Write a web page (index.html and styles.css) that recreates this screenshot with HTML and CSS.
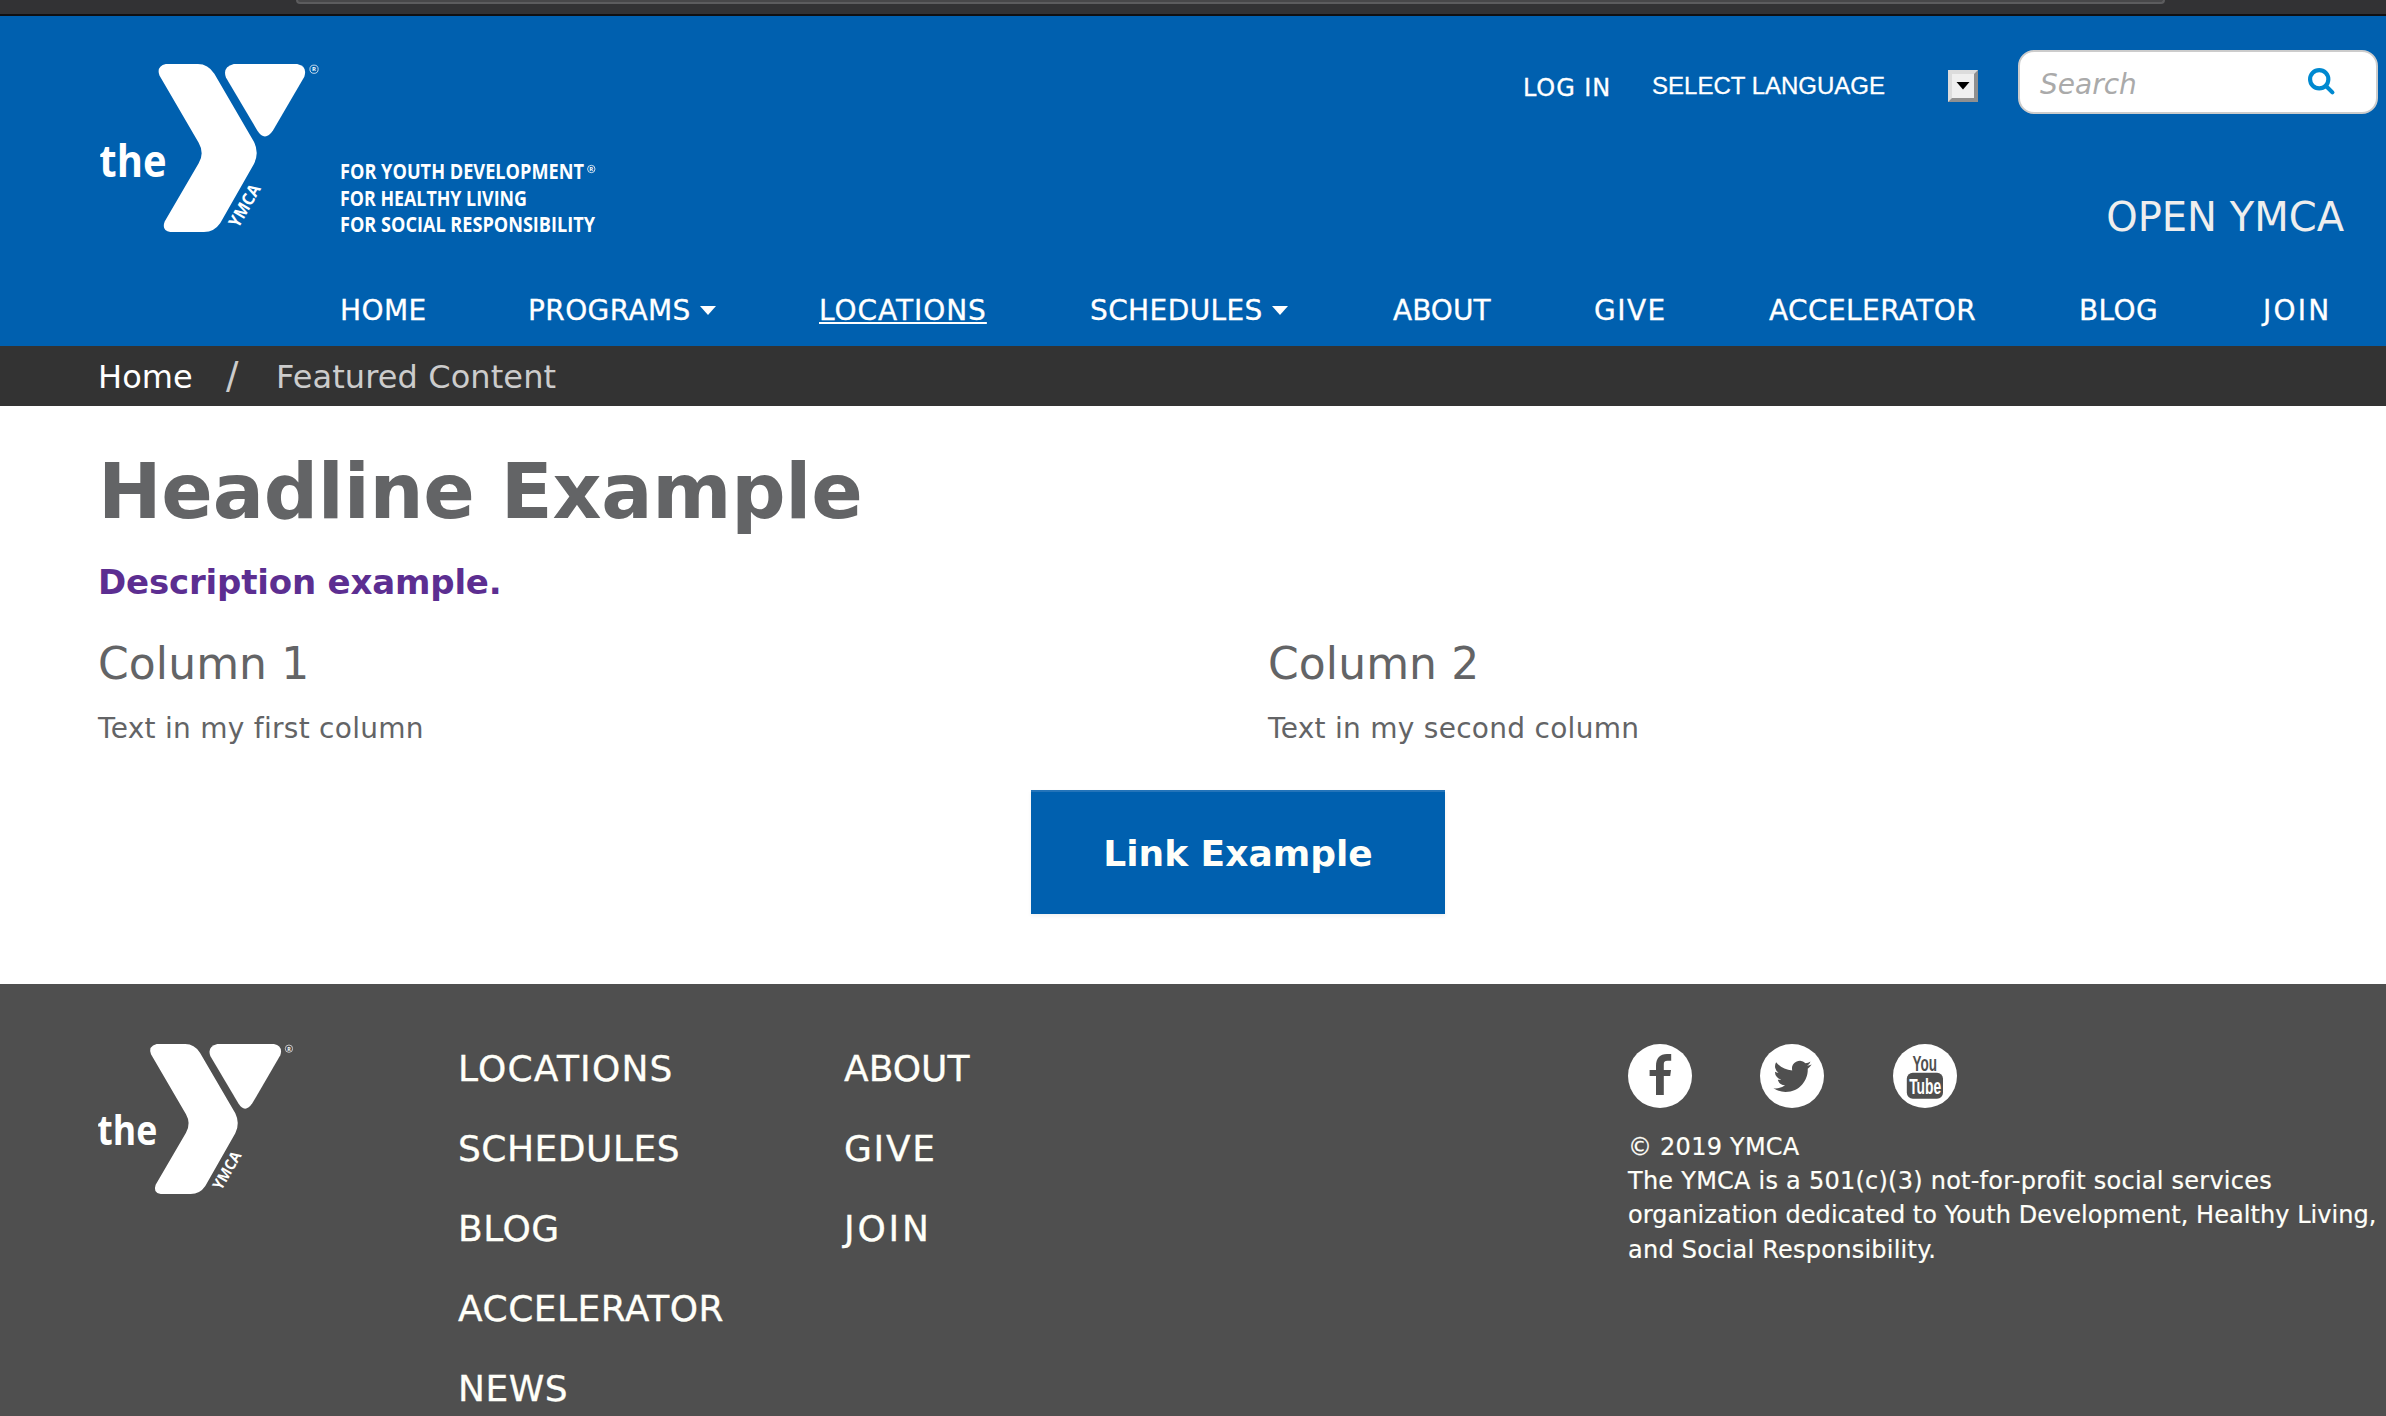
FILE: index.html
```html
<!DOCTYPE html>
<html lang="en">
<head>
<meta charset="utf-8">
<title>Headline Example | Open YMCA</title>
<link rel="stylesheet" href="styles.css">
</head>
<body>
<svg class="defs" aria-hidden="true">
  <symbol id="logo" viewBox="54 72 586 450">
    <path d="M230 72H316Q343 72 360 98L466 280Q481 311 466 340L376 498Q360 522 332 522H242Q218 518 227 494L318 338Q334 311 318 283L213 103Q204 78 230 72Z"/>
    <path d="M412 72H582Q610 78 601 106L517 250Q495 282 475 250L391 108Q381 80 412 72Z"/>
    <text class="logo-the" x="52" y="374" textLength="180" lengthAdjust="spacingAndGlyphs">the</text>
    <text class="logo-ymca" transform="translate(424 513) rotate(-60)" textLength="124" lengthAdjust="spacingAndGlyphs">YMCA</text>
    <circle cx="627" cy="86" r="11" fill="none" stroke="#fff" stroke-width="2"/>
    <text class="logo-r" x="621.500" y="92">R</text>
  </symbol>
</svg>

<div class="browser"><div class="browser-url"></div></div>

<header class="header">
  <div class="header-top">
    <svg class="header-logo"><use href="#logo"/></svg>
    <svg class="tagline" viewBox="0 0 262 80">
      <text x="1" y="21" textLength="244" lengthAdjust="spacingAndGlyphs">FOR YOUTH DEVELOPMENT</text>
      <text x="1" y="48" textLength="187" lengthAdjust="spacingAndGlyphs">FOR HEALTHY LIVING</text>
      <text x="1" y="74" textLength="255" lengthAdjust="spacingAndGlyphs">FOR SOCIAL RESPONSIBILITY</text>
      <circle cx="252.300" cy="11" r="3.700" fill="none" stroke="#fff" stroke-width="0.800"/>
      <text class="tagline-r" x="250.300" y="13.300">R</text>
    </svg>
    <div class="header-right">
      <div class="tools">
        <a class="login">LOG IN</a>
        <span class="language">SELECT LANGUAGE</span>
        <span class="select-button"><svg viewBox="0 0 14 8"><path d="M0.500 0H13.500L7 7.500Z"/></svg></span>
        <div class="search">
          <span>Search</span>
          <svg viewBox="0 0 26 26"><circle cx="10.800" cy="10.800" r="8.800"/><path d="M17.300 17.300L23.500 23.500"/></svg>
        </div>
      </div>
      <div class="site-name">OPEN YMCA</div>
    </div>
  </div>
  <nav class="nav">
    <a>HOME</a>
    <a>PROGRAMS<i class="caret"></i></a>
    <a class="wide"><span class="active">LOCATIONS</span></a>
    <a>SCHEDULES<i class="caret"></i></a>
    <a class="snug">ABOUT</a>
    <a class="wider">GIVE</a>
    <a>ACCELERATOR</a>
    <a>BLOG</a>
    <a class="widest">JOIN</a>
  </nav>
</header>

<div class="breadcrumb"><a>Home</a><span class="slash">/</span><span>Featured Content</span></div>

<main class="main">
  <h1>Headline Example</h1>
  <p class="description">Description example.</p>
  <div class="columns">
    <section><h2>Column 1</h2><p>Text in my first column</p></section>
    <section><h2>Column 2</h2><p>Text in my second column</p></section>
  </div>
  <a class="button">Link Example</a>
</main>

<footer class="footer">
  <svg class="footer-logo"><use href="#logo"/></svg>
  <div class="links">
    <a class="wide">LOCATIONS</a><a>SCHEDULES</a><a>BLOG</a><a>ACCELERATOR</a><a>NEWS</a>
  </div>
  <div class="links">
    <a class="snug">ABOUT</a><a class="wider">GIVE</a><a class="widest">JOIN</a>
  </div>
  <div class="info">
    <div class="social">
      <svg viewBox="0 0 64 64"><circle cx="32" cy="32" r="32" fill="#fff"/><path fill="#4f4f4f" d="M28 51V32H21.600V26H28V22C28 14 32 10 39 10H43.200V16.800H39.500C36.500 16.800 35.800 18 35.800 20.500V26H43L42.200 32H35.800V51Z"/></svg>
      <svg viewBox="0 0 64 64"><circle cx="32" cy="32" r="32" fill="#fff"/><path fill="#4f4f4f" transform="translate(13.500 13.300) scale(1.590)" d="M23.950 4.570a10 10 0 0 1-2.820.770 4.960 4.960 0 0 0 2.160-2.720c-.950.560-2 .960-3.130 1.180a4.920 4.920 0 0 0-8.380 4.480C7.690 8.100 4.070 6.130 1.640 3.160a4.920 4.920 0 0 0 1.520 6.570 4.900 4.900 0 0 1-2.230-.610v.060a4.920 4.920 0 0 0 3.950 4.830 5 5 0 0 1-2.210.080 4.940 4.940 0 0 0 4.600 3.420A9.870 9.870 0 0 1 0 19.540a13.990 13.990 0 0 0 7.550 2.210c9.050 0 14-7.500 14-13.980 0-.210 0-.420-.020-.630a9.940 9.940 0 0 0 2.460-2.550z"/></svg>
      <svg class="youtube" viewBox="0 0 64 64"><circle cx="32" cy="32" r="32" fill="#fff"/><text x="19.500" y="27" fill="#4f4f4f" textLength="24.500" lengthAdjust="spacingAndGlyphs">You</text><rect x="13.800" y="28.700" width="36.200" height="26" rx="6" fill="#4f4f4f"/><text x="16.200" y="50" fill="#fff" textLength="32" lengthAdjust="spacingAndGlyphs">Tube</text></svg>
    </div>
    <p>© 2019 YMCA<br>The YMCA is a 501(c)(3) not-for-profit social services<br><span class="dense">organization dedicated to Youth Development, Healthy Living,</span><br>and Social Responsibility.</p>
  </div>
</footer>
</body>
</html>
```
FILE: styles.css
```css
* { box-sizing: border-box; }
body {
  margin: 0;
  height: 1416px;
  overflow: hidden;
  font-family: Verdana, "DejaVu Sans", sans-serif;
  color: #636466;
  background: #fff;
}
h1, h2, p { margin: 0; font-weight: normal; }
svg { display: block; flex: none; overflow: visible; }
a { color: inherit; text-decoration: none; white-space: nowrap; }
.defs { display: none; }

.browser { height: 16px; padding: 0 221px 0 296px; background: #323234; border-bottom: 2px solid #101012; }
.browser-url { height: 4px; background: #474749; border: 2px solid #5c5c5e; border-top: 0; border-radius: 0 0 6px 6px; }

/* Logo */
#logo { fill: #fff; }
.logo-the { font: 700 122px "Open Sans", sans-serif; }
.logo-ymca { font: 700 46px "Open Sans", sans-serif; }
.logo-r { font: 700 16px "Open Sans", sans-serif; }

/* Header */
.header { height: 330px; background: #0060af; color: #fff; }
.header-top { display: flex; height: 264px; padding: 0 8px 0 100px; }
.header-logo { width: 219px; height: 168px; margin-top: 48px; }
.tagline { width: 262px; height: 80px; margin: 142px 0 0 20px; fill: #fff; font: 700 20.5px "Open Sans", sans-serif; }
.tagline-r { font-size: 6px; }
.header-right { flex: 1; padding-top: 34px; }
.tools { display: flex; justify-content: flex-end; align-items: center; height: 64px; }
.login { margin: 12px 41px 0 0; font-size: 24px; letter-spacing: 0.9px; -webkit-text-stroke: 0.3px; }
.language { margin: 8px 63px 0 0; font: 24px Arial, "Liberation Sans", sans-serif; -webkit-text-stroke: 0.3px; }
.select-button { display: flex; align-items: center; justify-content: center; width: 30px; height: 32px; margin: 8px 40px 0 0; background: #efefef; border: 4px solid; border-color: #dcdcdc #909090 #909090 #dcdcdc; }
.select-button svg { width: 14px; height: 8px; margin-bottom: 1px; fill: #000; }
.search { display: flex; align-items: center; justify-content: space-between; width: 360px; height: 64px; padding: 0 41px 0 20px; background: #fff; border: 2px solid #ccc; border-radius: 16px; color: #aaa; font-size: 28px; font-style: italic; }
.search span { padding-top: 4px; }
.search svg { width: 27px; height: 27px; margin-bottom: 2px; fill: none; stroke: #0089d0; stroke-width: 4; stroke-linecap: round; }
.site-name { margin: 73px 34px 0 0; font-size: 40px; line-height: 60px; text-align: right; color: #eee; }

.nav { display: grid; grid-template-columns: 188px 291px 271px 303px 201px 175px 310px 184px auto; padding: 1px 0 0 340px; font-size: 28px; line-height: 60px; letter-spacing: 0.4px; -webkit-text-stroke: 0.3px; }
.caret { display: inline-block; margin-left: 9px; border: 8px solid transparent; border-top: 9px solid #fff; border-bottom: 0; vertical-align: 5px; }
.active { text-decoration: underline; text-decoration-thickness: 2px; text-underline-offset: 2px; text-decoration-skip-ink: none; }
.wide { letter-spacing: 0.95px; }
.snug { letter-spacing: 0; }
.wider { letter-spacing: 1.5px; }
.widest { letter-spacing: 2.2px; }

.breadcrumb { display: flex; height: 60px; padding-left: 98px; background: #333; color: #ccc; font-size: 32px; line-height: 63px; letter-spacing: 0.1px; }
.breadcrumb a { color: #fff; }
.slash { width: 83px; padding-left: 33px; font-size: 37px; line-height: 60px; }

/* Content */
.main { display: flex; flex-direction: column; height: 578px; padding: 46px 8px 0 98px; }
.main h1 { font-size: 76px; font-weight: bold; line-height: 80px; letter-spacing: -0.25px; }
.description { margin-top: 26px; font-size: 34px; font-weight: bold; line-height: 48px; letter-spacing: -0.18px; color: #5c2e91; }
.columns { display: grid; grid-template-columns: 1170px 1fr; margin-top: 34px; }
.columns h2 { font-size: 44px; line-height: 48px; letter-spacing: 0.1px; }
.columns p { margin-top: 21px; font-size: 28px; line-height: 40px; letter-spacing: 0.28px; }
.button { align-self: center; width: 414px; height: 124px; margin-top: 41px; padding-top: 4px; background: #0060af; box-shadow: inset 0 2px #2474b9, 0 2px 4px rgba(0, 0, 0, 0.06); color: #fffff9; font-size: 36px; font-weight: bold; line-height: 120px; text-align: center; }

/* Footer */
.footer { display: grid; grid-template-columns: 360px 386px 784px 1fr; height: 432px; padding-left: 98px; background: #4f4f4f; color: #fffff9; }
.footer-logo { width: 195.3px; height: 150px; margin-top: 60px; }
.links { display: flex; flex-direction: column; padding-top: 44.5px; font-size: 36px; line-height: 80px; letter-spacing: 0.5px; -webkit-text-stroke: 0.3px; }
.info { padding-top: 60px; }
.social { display: flex; gap: 68.3px; }
.social svg { width: 64px; height: 64px; }
.youtube text { font: 700 22px "Liberation Sans Narrow", "Liberation Sans", sans-serif; }
.info p { margin-top: 21.5px; font-size: 24px; line-height: 34.4px; letter-spacing: 0.24px; white-space: nowrap; -webkit-text-stroke: 0.2px; }
.info .dense { letter-spacing: 0.05px; }
.links .wide { letter-spacing: 1.2px; }
.links .snug { letter-spacing: 0; }
.links .wider { letter-spacing: 1.7px; }
.links .widest { letter-spacing: 2.8px; }
```
